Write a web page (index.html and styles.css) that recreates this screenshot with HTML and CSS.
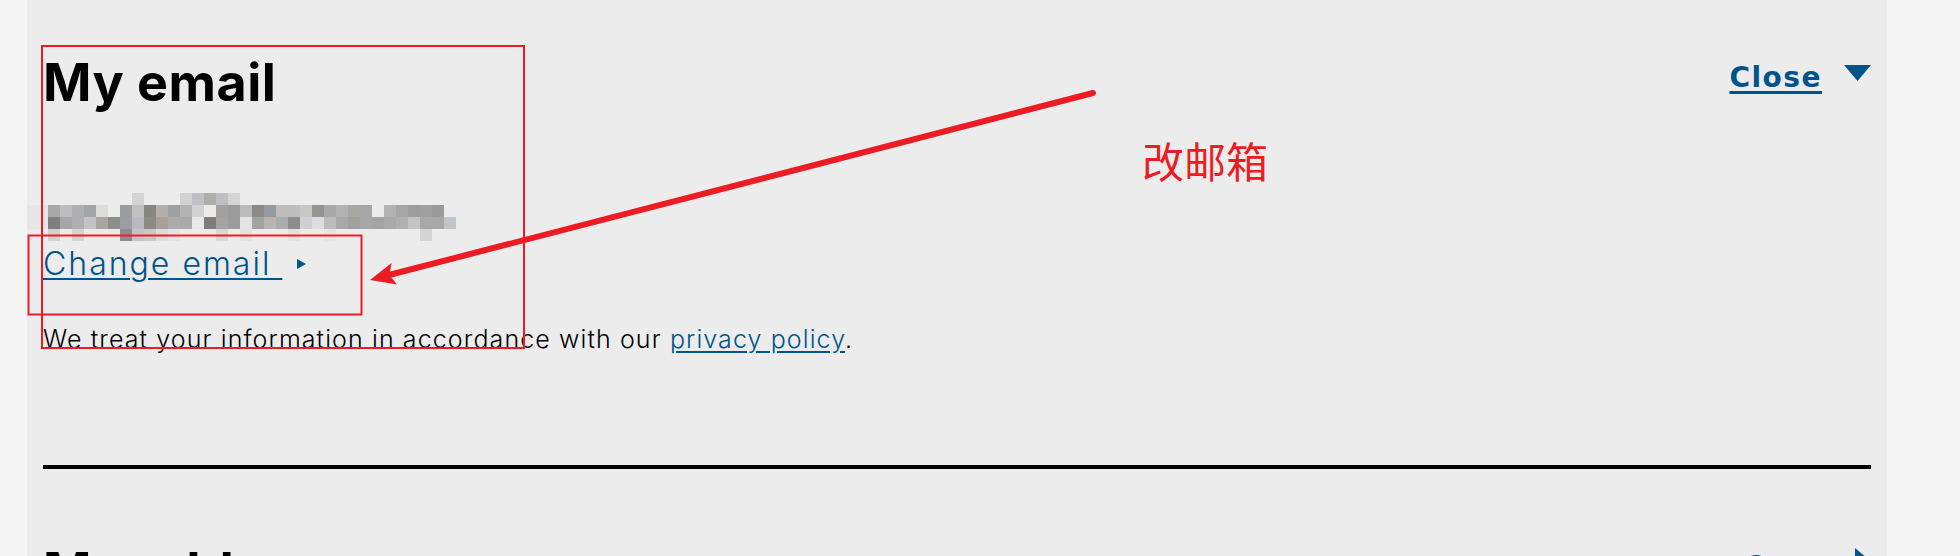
FILE: index.html
```html
<!DOCTYPE html>
<html lang="en">
<head>
  <meta charset="UTF-8" />
  <meta name="viewport" content="width=device-width, initial-scale=1.0" />
  <title>My account</title>
  <link rel="stylesheet" href="styles.css">
</head>
<body>
  <div class="panel">
    <section class="block">
      <div class="block-head">
        <h2>My email</h2>
        <a class="toggle toggle-close" href="#"><span>Close</span>
          <svg width="27" height="16" viewBox="0 0 27 16"><polygon points="0,0 27,0 13.5,16" /></svg>
        </a>
      </div>
      <div class="block-body">
        <!-- masked address -->
        <svg class="masked-email" width="440" height="48" viewBox="0 0 440 48">
          <rect x="0" y="12" width="21" height="24" fill="#e6e6e6" />
          <rect x="105" y="0" width="12" height="12" fill="#d4d4d4" />
          <rect x="153" y="0" width="12" height="12" fill="#d2d2d2" />
          <rect x="165" y="0" width="12" height="12" fill="#bfc0c3" />
          <rect x="177" y="0" width="12" height="12" fill="#b0aeab" />
          <rect x="189" y="0" width="12" height="12" fill="#bebfc2" />
          <rect x="201" y="0" width="12" height="12" fill="#d4d4d4" />

          <rect x="21" y="12" width="12" height="12" fill="#a8a8a8" />
          <rect x="33" y="12" width="12" height="12" fill="#bcbdbf" />
          <rect x="45" y="12" width="12" height="12" fill="#b0b0b0" />
          <rect x="57" y="12" width="12" height="12" fill="#a3a6a6" />
          <rect x="69" y="12" width="12" height="12" fill="#dcdcd8" />
          <rect x="93" y="12" width="12" height="12" fill="#9a9c9f" />
          <rect x="105" y="12" width="12" height="12" fill="#c0c0c0" />
          <rect x="117" y="12" width="12" height="12" fill="#878682" />
          <rect x="129" y="12" width="12" height="12" fill="#b5afab" />
          <rect x="141" y="12" width="12" height="12" fill="#9fa0a2" />
          <rect x="153" y="12" width="12" height="12" fill="#b5b3af" />
          <rect x="165" y="12" width="12" height="12" fill="#d2d2d2" />
          <rect x="189" y="12" width="12" height="12" fill="#a3a19f" />
          <rect x="201" y="12" width="12" height="12" fill="#9b9b9b" />
          <rect x="213" y="12" width="12" height="12" fill="#bbbbbb" />
          <rect x="225" y="12" width="12" height="12" fill="#8b8a88" />
          <rect x="237" y="12" width="12" height="12" fill="#969ba3" />
          <rect x="249" y="12" width="12" height="12" fill="#bfbdbb" />
          <rect x="261" y="12" width="12" height="12" fill="#bdbdbd" />
          <rect x="273" y="12" width="12" height="12" fill="#c7c7c7" />
          <rect x="285" y="12" width="12" height="12" fill="#949492" />
          <rect x="297" y="12" width="12" height="12" fill="#a9a9a9" />
          <rect x="309" y="12" width="12" height="12" fill="#b1b3b5" />
          <rect x="321" y="12" width="12" height="12" fill="#a9a6a4" />
          <rect x="333" y="12" width="12" height="12" fill="#a6a6a8" />
          <rect x="357" y="12" width="12" height="12" fill="#b2b2b2" />
          <rect x="369" y="12" width="12" height="12" fill="#a6a6a6" />
          <rect x="381" y="12" width="12" height="12" fill="#9e9e9e" />
          <rect x="393" y="12" width="12" height="12" fill="#a0a0a0" />
          <rect x="405" y="12" width="12" height="12" fill="#9a9a9a" />

          <rect x="21" y="24" width="12" height="12" fill="#7e7e80" />
          <rect x="33" y="24" width="12" height="12" fill="#a6a6a8" />
          <rect x="45" y="24" width="12" height="12" fill="#b0b0b0" />
          <rect x="57" y="24" width="12" height="12" fill="#c1c3c6" />
          <rect x="69" y="24" width="12" height="12" fill="#a9a5a1" />
          <rect x="81" y="24" width="12" height="12" fill="#8e8e8a" />
          <rect x="93" y="24" width="12" height="12" fill="#9c9ea1" />
          <rect x="105" y="24" width="12" height="12" fill="#b9bac0" />
          <rect x="117" y="24" width="12" height="12" fill="#8d8984" />
          <rect x="129" y="24" width="12" height="12" fill="#a89f99" />
          <rect x="141" y="24" width="12" height="12" fill="#acacac" />
          <rect x="153" y="24" width="12" height="12" fill="#aaaaac" />
          <rect x="165" y="24" width="12" height="12" fill="#e6e8ea" />
          <rect x="177" y="24" width="12" height="12" fill="#7e7c7c" />
          <rect x="189" y="24" width="12" height="12" fill="#a4a4a2" />
          <rect x="201" y="24" width="12" height="12" fill="#9a9c9f" />
          <rect x="213" y="24" width="12" height="12" fill="#e4e4e6" />
          <rect x="225" y="24" width="12" height="12" fill="#a3a3a3" />
          <rect x="237" y="24" width="12" height="12" fill="#b9b4b0" />
          <rect x="249" y="24" width="12" height="12" fill="#a9abad" />
          <rect x="261" y="24" width="12" height="12" fill="#8d8d8f" />
          <rect x="273" y="24" width="12" height="12" fill="#cfcfcf" />
          <rect x="285" y="24" width="12" height="12" fill="#dadde2" />
          <rect x="297" y="24" width="12" height="12" fill="#bcbcbc" />
          <rect x="309" y="24" width="12" height="12" fill="#a8a8a8" />
          <rect x="321" y="24" width="12" height="12" fill="#a0a09e" />
          <rect x="333" y="24" width="12" height="12" fill="#a7a7a7" />
          <rect x="345" y="24" width="12" height="12" fill="#a4a4a4" />
          <rect x="357" y="24" width="12" height="12" fill="#aaa9a8" />
          <rect x="369" y="24" width="12" height="12" fill="#b0b0b0" />
          <rect x="381" y="24" width="12" height="12" fill="#c4c4c4" />
          <rect x="393" y="24" width="12" height="12" fill="#a8a8a6" />
          <rect x="405" y="24" width="12" height="12" fill="#a8a8a8" />
          <rect x="417" y="24" width="12" height="12" fill="#c0c5cc" />

          <rect x="21" y="36" width="12" height="12" fill="#d2d2d2" />
          <rect x="45" y="36" width="12" height="12" fill="#d4d4d4" />
          <rect x="93" y="36" width="12" height="12" fill="#8b8d92" />
          <rect x="105" y="36" width="12" height="12" fill="#c2c6cc" />
          <rect x="117" y="36" width="12" height="12" fill="#c8c8c8" />
          <rect x="129" y="36" width="12" height="12" fill="#dcdcdc" />
          <rect x="141" y="36" width="12" height="12" fill="#e2e4e8" />
          <rect x="189" y="36" width="12" height="12" fill="#d8d8d8" />
          <rect x="213" y="36" width="12" height="12" fill="#e2e2e2" />
          <rect x="261" y="36" width="12" height="12" fill="#e2e2e2" />
          <rect x="297" y="36" width="12" height="12" fill="#e6e6e6" />
          <rect x="393" y="36" width="12" height="12" fill="#d4d4d4" />
        </svg>
        <a class="change-link" href="#"><span>Change email&nbsp;</span>
          <svg width="9" height="10" viewBox="0 0 9 10"><polygon points="0,0 9,5 0,10" /></svg>
        </a>
        <p class="note">We treat your information in accordance with our <a href="#">privacy policy</a>.</p>
      </div>
    </section>
    <hr class="divider">
    <section class="block">
      <div class="block-head">
        <h2>My address</h2>
        <a class="toggle toggle-open" href="#"><span>Open</span>
          <svg width="16" height="27" viewBox="0 0 16 27"><polygon points="0,0 16,13.5 0,27" /></svg>
        </a>
      </div>
    </section>
  </div>

  <!-- review markup drawn over the page -->
  <svg class="markup" width="1960" height="556" viewBox="0 0 1960 556">
    <rect x="42" y="46" width="482" height="302" />
    <rect x="28.5" y="235.5" width="333" height="79" />
    <line x1="1093" y1="93" x2="389" y2="275" />
    <polygon points="370,280 391.5,263 389.4,275 397,284.4" />
  </svg>
  <div class="markup-note">改邮箱</div>
</body>
</html>
```

FILE: styles.css
```css
html, body {
  margin: 0;
  overflow: hidden;
}
body {
  background-color: #f4f4f4;
  font-family: Inter, "Noto Sans", sans-serif;
  color: #000;
  position: relative;
}
.panel {
  margin-left: 27px;
  width: 1860px;
  box-sizing: border-box;
  padding: 53px 16px 120px;
  background-color: #ececec;
}
.block-head {
  display: flex;
  justify-content: space-between;
  align-items: flex-start;
}
.block-head h2 {
  margin: 0;
  font-size: 52px;
  line-height: 60px;
  font-weight: 700;
  letter-spacing: 0.5px;
}
.toggle {
  display: flex;
  align-items: flex-start;
  gap: 22px;
  margin-top: 9px;
  color: #00548a;
  text-decoration: none;
  font-family: "DejaVu Sans", sans-serif;
  font-weight: bold;
  font-size: 28px;
  line-height: 32px;
  letter-spacing: 1.5px;
}
.toggle span {
  text-decoration: underline;
  text-decoration-thickness: 3px;
  text-underline-offset: 4px;
}
.toggle svg {
  fill: #00548a;
}
.toggle-close svg {
  margin-top: 3px;
}
.toggle-open svg {
  margin-top: -3px;
}
.masked-email {
  display: block;
  margin: 80px 0 0 -16px;
}
.change-link {
  display: inline-flex;
  align-items: center;
  gap: 15px;
  margin-top: 3px;
  color: #00548a;
  text-decoration: none;
  font-size: 32px;
  line-height: 40px;
  font-weight: 300;
  letter-spacing: 2px;
}
.change-link span {
  text-decoration: underline;
  text-decoration-thickness: 2px;
  text-underline-offset: 3px;
}
.change-link svg {
  fill: #00548a;
}
.note {
  margin: 39px 0 0;
  font-size: 25px;
  line-height: 32px;
  font-weight: 300;
  letter-spacing: 1.1px;
}
.note a {
  color: #00548a;
  text-underline-offset: 3px;
}
.divider {
  margin: 110px 0 73px;
  height: 4px;
  border: none;
  background-color: #000;
}
.markup {
  position: absolute;
  top: 0;
  left: 0;
  pointer-events: none;
}
.markup rect {
  fill: none;
  stroke: #ed1c24;
  stroke-width: 2;
}
.markup line {
  stroke: #ed1c24;
  stroke-width: 6;
  stroke-linecap: round;
}
.markup polygon {
  fill: #ed1c24;
}
.markup-note {
  position: absolute;
  left: 1142px;
  top: 132px;
  font-family: "Noto Sans CJK SC", sans-serif;
  font-size: 42px;
  line-height: 56px;
  color: #ed1c24;
}
```
